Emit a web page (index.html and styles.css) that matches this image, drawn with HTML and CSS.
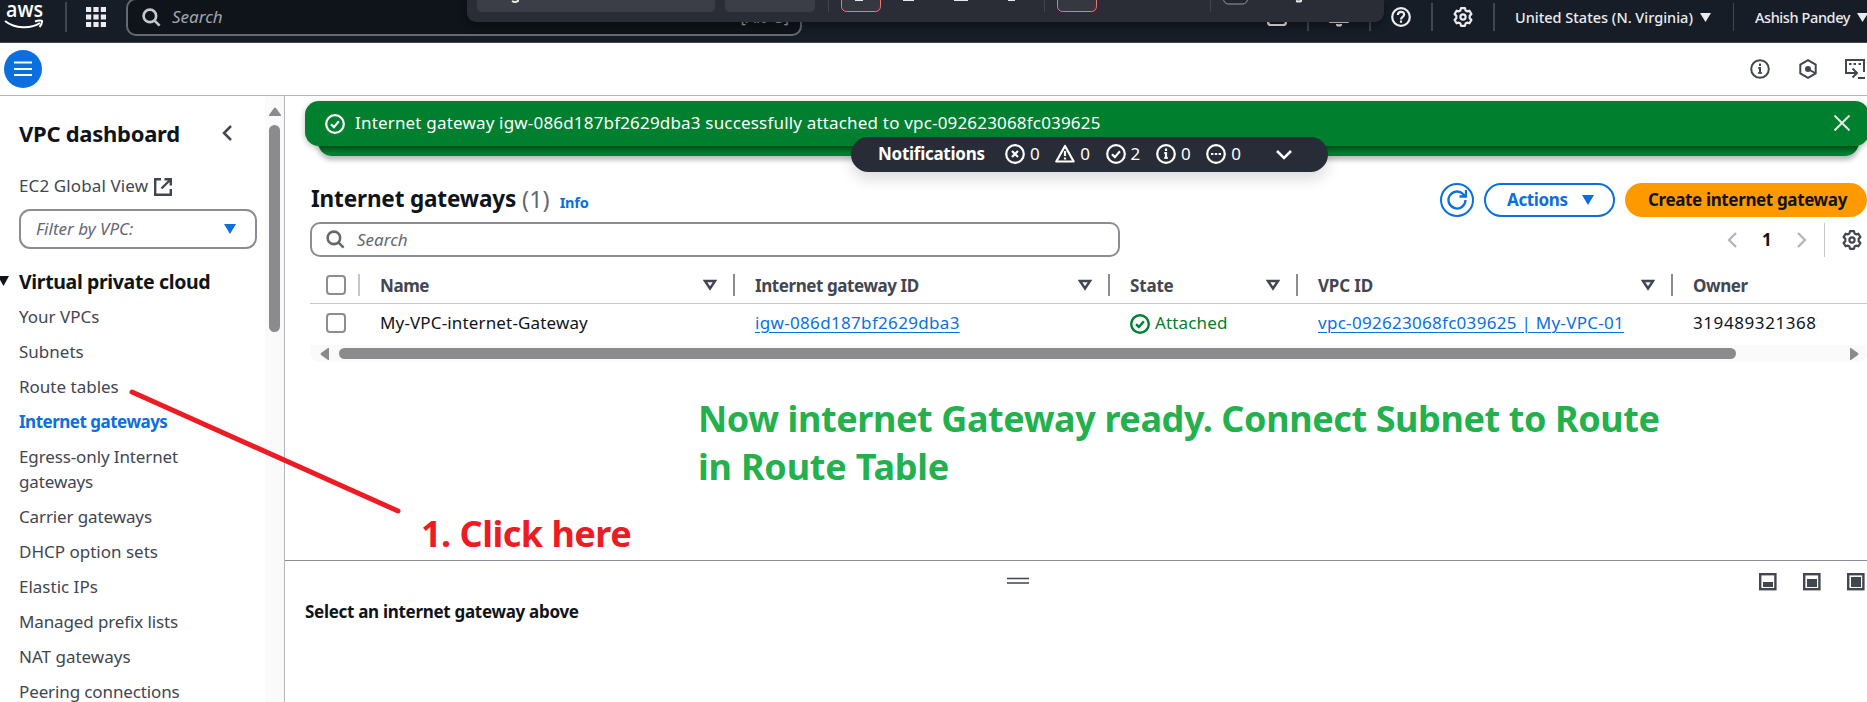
FILE: index.html
```html
<!DOCTYPE html>
<html lang="en">
<head>
<meta charset="utf-8">
<title>Internet gateways | VPC Console</title>
<link rel="stylesheet" href="styles.css">
</head>
<body>
<svg class="defs" aria-hidden="true">
  <symbol id="gear" viewBox="0 0 20 20"><path d="M8 1.200h4l.6 2.300 1.500.9 2.300-.7 2 3.400-1.700 1.700v2.400l1.700 1.700-2 3.400-2.300-.7-1.500.9-.6 2.300H8l-.6-2.300-1.500-.9-2.300.7-2-3.400 1.700-1.700V8.800L1.600 7.100l2-3.400 2.300.7 1.500-.9z" stroke-linejoin="round"/><circle cx="10" cy="10" r="2.600"/></symbol>
  <symbol id="info" viewBox="0 0 20 20"><circle cx="10" cy="10" r="8.800"/><path d="M10 8v6.500"/><path d="M8 9h2M8 14h4" stroke-width="1.400"/><path d="M10 4.500V7"/></symbol>
  <symbol id="check" viewBox="0 0 20 20"><circle cx="10" cy="10" r="8.800"/><path d="M6 10.200l2.900 2.900 5-5.800"/></symbol>
  <symbol id="lens" viewBox="0 0 20 20"><circle cx="8.300" cy="8.300" r="6.600"/><path d="M13 13l5.500 5.500"/></symbol>
  <symbol id="sort" viewBox="0 0 14 12"><path d="M2 2h10l-5 7.500z"/></symbol>
</svg>

<header class="topbar">
  <svg class="aws" viewBox="0 0 42 32"><text x="2" y="17" textLength="37" lengthAdjust="spacingAndGlyphs">aws</text><path d="M1 21c10 8 26 8 35 2"/><path d="M31 21.500c4-1.500 8-1 7 0 0 2-1 4-2.500 5.500"/></svg>
  <i class="bar bar-first"></i>
  <svg class="apps" viewBox="0 0 20 20"><path d="M0 2.500h5.200M7.400 2.500h5.200M14.800 2.500H20M0 10h5.200M7.400 10h5.200M14.800 10H20M0 17.500h5.200M7.400 17.500h5.200M14.800 17.500H20"/></svg>
  <div class="top-search">
    <svg class="ico" viewBox="0 0 20 20"><use href="#lens"/></svg>
    <span class="top-placeholder">Search</span>
    <span class="shortcut">[Alt+S]</span>
  </div>
  <div class="top-right">
    <svg class="ico" viewBox="0 0 20 20"><rect x="1" y="1" width="18" height="17" rx="3"/></svg>
    <i class="bar"></i>
    <svg class="ico" viewBox="0 0 20 20"><path d="M2 15h16l-3-4V6a5 5 0 0 0-10 0v5z"/><path d="M8 17a2 1.500 0 0 0 4 0"/></svg>
    <i class="bar"></i>
    <svg class="ico" viewBox="0 0 20 20"><circle cx="10" cy="10" r="8.800"/><path d="M6.900 8c0-4.200 6.200-4.200 6.200-.4 0 2.400-3.100 2.200-3.100 4.900M10 13.600v2.200"/></svg>
    <i class="bar"></i>
    <svg class="ico"><use href="#gear"/></svg>
    <i class="bar"></i>
    <span class="top-text region">United States (N. Virginia)</span>
    <svg class="caret" viewBox="0 0 11 10"><path d="M0 0h11L5.500 9z"/></svg>
    <i class="bar bar-thin"></i>
    <span class="top-text account">Ashish Pandey</span>
    <svg class="caret" viewBox="0 0 11 10"><path d="M0 0h11L5.500 9z"/></svg>
  </div>
</header>

<div class="capture-bar">
  <svg viewBox="0 0 917 22">
    <rect class="field" x="10" y="-20" width="238" height="32" rx="5"/>
    <rect class="field" x="258" y="-20" width="90" height="32" rx="5"/>
    <path class="sep" d="M361.500 0v12M577.500 0v12M743.500 0v12"/>
    <rect class="tool" x="374.500" y="-20" width="39" height="31.500" rx="5"/>
    <rect class="tool" x="590.500" y="-20" width="39" height="31.500" rx="5"/>
    <rect class="toggle" x="756.500" y="-16" width="24" height="20" rx="5"/>
    <path class="stub" d="M388 0h8M436 0h11M487 0h14M541 0h7"/>
    <path class="tail" d="M45 1q3 2 6 0V-3M829 1q3 1 5 0V-3"/>
  </svg>
</div>

<div class="subbar">
  <button class="menu"><svg viewBox="0 0 18 16"><path d="M0 1.500h18M0 8h18M0 14h18"/></svg></button>
  <div class="subbar-icons">
    <svg class="ico"><use href="#info"/></svg>
    <svg class="ico" viewBox="0 0 20 20"><path d="M10 1.200l7.700 4.400v8.800L10 18.800l-7.700-4.400V5.600z"/><circle class="dot" cx="10" cy="10" r="3"/><path d="M10 10l7 4"/></svg>
    <svg class="ico" viewBox="0 0 20 20"><path d="M5 14H1V1h18v12M4 5h2.500M8.500 5H11M13.500 5H16M5 14h6M7.500 9.500l4.500 4.500-4.500 4.500M13 19h7"/></svg>
  </div>
</div>

<div class="layout">
  <nav class="side">
    <div class="side-body">
      <div class="side-head"><h2>VPC dashboard</h2><svg viewBox="0 0 10 16"><path d="M9 1L2 8l7 7"/></svg></div>
      <a class="global">EC2 Global View <svg viewBox="0 0 18 18"><path d="M7 1.200H1.200v15.600h15.600V11M10.500 1.200h6.300v6.300M16.500 1.500L7.500 10.500"/></svg></a>
      <div class="select"><span>Filter by VPC:</span><svg viewBox="0 0 12 10"><path d="M0 0h12L6 10z"/></svg></div>
      <div class="group"><svg viewBox="0 0 11 10"><path d="M0 0h11L5.500 10z"/></svg><h3>Virtual private cloud</h3></div>
      <ul>
        <li>Your VPCs</li>
        <li>Subnets</li>
        <li>Route tables</li>
        <li class="active">Internet gateways</li>
        <li class="tight">Egress-only Internet gateways</li>
        <li class="tight">Carrier gateways</li>
        <li>DHCP option sets</li>
        <li>Elastic IPs</li>
        <li class="tight">Managed prefix lists</li>
        <li>NAT gateways</li>
        <li class="tight">Peering connections</li>
      </ul>
    </div>
    <div class="vscroll"><svg viewBox="0 0 12 9"><path d="M0 9V8l5-7q1-1 2 0l5 7v1z"/></svg><i></i></div>
  </nav>

  <main>
    <section class="list">
      <div class="flash">
        <svg class="ico"><use href="#check"/></svg>
        <span class="flash-text">Internet gateway igw-086d187bf2629dba3 successfully attached to vpc-092623068fc039625</span>
        <svg class="close" viewBox="0 0 16 16"><path d="M.5.5l15 15M15.500.5l-15 15"/></svg>
        <div class="pill">
          <b>Notifications</b>
          <span><svg class="ico" viewBox="0 0 20 20"><circle cx="10" cy="10" r="8.800"/><path d="M7 7l6 6M13 7l-6 6"/></svg>0</span>
          <span><svg class="ico" viewBox="0 0 20 20"><path d="M10 2L1.300 17.500h17.400z" stroke-linejoin="round"/><path d="M10 7v5M10 13.500v2"/></svg>0</span>
          <span><svg class="ico"><use href="#check"/></svg>2</span>
          <span><svg class="ico"><use href="#info"/></svg>0</span>
          <span><svg class="ico" viewBox="0 0 20 20"><circle cx="10" cy="10" r="8.800"/><path d="M5 10h2.400M8.800 10h2.400M12.600 10H15"/></svg>0</span>
          <svg class="chev" viewBox="0 0 16 10"><path d="M1 1l7 7 7-7"/></svg>
        </div>
      </div>

      <div class="title-row">
        <h1>Internet gateways</h1><span class="count">(1)</span><a class="info-link">Info</a>
        <div class="actions">
          <button class="refresh"><svg viewBox="0 0 20 20"><path d="M18.500 10a8.500 8.500 0 1 1-2.500-6l2.500 2.300M12.500 6.500H19V0"/></svg></button>
          <button class="outline"><span>Actions</span><svg viewBox="0 0 12 10"><path d="M0 0h12L6 10z"/></svg></button>
          <button class="primary"><span>Create internet gateway</span></button>
        </div>
      </div>

      <div class="filter-row">
        <div class="filter"><svg class="ico"><use href="#lens"/></svg><span>Search</span></div>
        <div class="pager">
          <svg viewBox="0 0 10 16"><path d="M9 1L2 8l7 7"/></svg>
          <b>1</b>
          <svg viewBox="0 0 10 16"><path d="M1 1l7 7-7 7"/></svg>
          <i></i>
          <svg class="ico"><use href="#gear"/></svg>
        </div>
      </div>

      <div class="grid head">
        <div class="pick"><i class="box"></i></div>
        <div class="cell"><span>Name</span><svg><use href="#sort"/></svg></div>
        <div class="cell"><span>Internet gateway ID</span><svg><use href="#sort"/></svg></div>
        <div class="cell"><span class="mild">State</span><svg><use href="#sort"/></svg></div>
        <div class="cell"><span class="mild">VPC ID</span><svg><use href="#sort"/></svg></div>
        <div class="cell last"><span>Owner</span></div>
      </div>
      <div class="grid row">
        <div class="pick"><i class="box"></i></div>
        <div class="cell"><span class="name">My-VPC-internet-Gateway</span></div>
        <div class="cell"><a class="igw">igw-086d187bf2629dba3</a></div>
        <div class="cell ok"><svg class="ico"><use href="#check"/></svg><span class="name">Attached</span></div>
        <div class="cell"><a class="vpc">vpc-092623068fc039625 | My-VPC-01</a></div>
        <div class="cell last"><span class="owner">319489321368</span></div>
      </div>
      <div class="hscroll">
        <svg viewBox="0 0 9 12"><path d="M9 0H8L1 5q-1 1 0 2l7 5h1z"/></svg><i></i><svg viewBox="0 0 9 12"><path d="M0 0h1l7 5q1 1 0 2l-7 5H0z"/></svg>
      </div>
    </section>

    <section class="split">
      <div class="split-bar">
        <svg class="handle" viewBox="0 0 22 8"><path d="M0 1.500h22M0 6h22"/></svg>
        <div class="sizes">
          <svg viewBox="0 0 18 18"><rect x="1.200" y="1.200" width="15.200" height="15"/><path d="M4 9h10v5H4z"/></svg>
          <svg viewBox="0 0 18 18"><rect x="1.200" y="1.200" width="15.200" height="15"/><path d="M4 6h10v8H4z"/></svg>
          <svg viewBox="0 0 18 18"><rect x="1.200" y="1.200" width="15.200" height="15"/><path d="M4 4h10v10H4z"/></svg>
        </div>
      </div>
      <h4>Select an internet gateway above</h4>
    </section>
  </main>
</div>

<svg class="pointer" viewBox="0 0 276 128"><path d="M4 4l266 119"/></svg>
<p class="note red">1. Click here</p>
<p class="note green">Now internet Gateway ready. Connect Subnet to Route<br><span>in Route Table</span></p>
</body>
</html>
```
FILE: styles.css
```css
* { box-sizing: border-box; }
body { margin: 0; width: 1867px; height: 702px; overflow: hidden; position: relative; background: #fff; color: #0f141a; font: 17px/25px "Noto Sans", sans-serif; display: flex; flex-direction: column; }
h1, h2, h3, h4, p, ul { margin: 0; padding: 0; }
ul { list-style: none; }
button { font: inherit; border: 0; padding: 0; }
span, b, a, h1, h2, h3, h4 { white-space: nowrap; }
svg { display: block; flex: none; fill: none; stroke: currentColor; stroke-width: 2; }
.defs { position: absolute; width: 0; height: 0; }
.ico { width: 20px; height: 20px; stroke-width: 2.200; }

.topbar { flex: none; height: 43px; background: #161d26; border-bottom: 1px solid #424650; display: flex; align-items: flex-start; color: #ebebf0; overflow: hidden; }
.aws { width: 42px; height: 32px; margin: 0 0 0 4px; color: #fff; flex: none; overflow: visible; }
.aws text { font: 600 22px "Open Sans", sans-serif; fill: #fff; stroke: none; }
.bar { width: 2px; height: 28px; margin-top: 3px; background: #424650; flex: none; }
.bar-first { margin: 2px 0 0 19px; height: 30px; }
.apps { width: 20px; height: 20px; margin: 7px 0 0 19px; stroke-width: 5; }
.top-search { flex: none; width: 676px; height: 38px; margin: -2px 0 0 20px; border: 2px solid #656871; border-radius: 10px; background: #0f141a; display: flex; align-items: center; padding-left: 14px; color: #c6c6cd; }
.top-search .ico { width: 19px; height: 19px; stroke-width: 2.800; }
.top-placeholder { font-style: italic; margin: 0 0 2px 11px; color: #a4a4ad; }
.shortcut { margin: 0 11px 0 auto; color: #a4a4ad; font-size: 16px; }
.top-right { margin-left: 465px; display: flex; flex: none; }
.top-right .ico { margin-top: 7px; }
.top-right .bar { margin-left: 20px; margin-right: 20px; }
.top-text { font-weight: 500; font-size: 14.500px; line-height: 34px; }
.account { letter-spacing: -.4px; }
.caret { width: 11px; height: 10px; fill: currentColor; stroke: none; margin: 13px 0 0 7px; }
.top-right .bar-thin { margin-left: 22px; margin-right: 21px; width: 1px; }

.capture-bar { position: absolute; left: 467px; top: 0; width: 917px; height: 22px; background: #2a2d36; border-radius: 0 0 9px 9px; overflow: hidden; box-shadow: 0 3px 8px rgba(0, 0, 0, .4); }
.capture-bar svg { width: 917px; height: 22px; stroke-width: 1; }
.field { fill: #3b3e47; stroke: none; }
.sep { stroke: #41454f; }
.tool { fill: #353841; stroke: #ef7772; }
.toggle { stroke: #969aa3; fill: #23262e; }
.stub, .tail { stroke: #e8e8e8; stroke-width: 2; }

.subbar { flex: none; height: 53px; border-bottom: 1px solid #b4b4bb; display: flex; align-items: center; justify-content: space-between; padding: 0 2px 0 4px; }
.menu { width: 38px; height: 38px; border-radius: 50%; background: #0b6fe0; color: #fff; display: flex; align-items: center; justify-content: center; }
.menu svg { width: 18px; height: 16px; stroke-width: 2.200; }
.subbar-icons { display: flex; gap: 28px; color: #424650; }
.subbar-icons .ico { stroke-width: 2; }
.subbar-icons .dot { fill: currentColor; stroke: none; }
.subbar-icons .ico:last-child { margin-left: -1px; }

.layout { flex: 1; min-height: 0; display: flex; }
.side { width: 285px; flex: none; border-right: 1px solid #b4b4bb; display: flex; overflow: hidden; }
.side-body { width: 265px; padding: 19px 8px 0 19px; color: #424650; flex: none; }
.side-head { display: flex; align-items: center; justify-content: space-between; height: 36px; padding-right: 25px; }
.side-head h2 { font-size: 22px; color: #0f141a; letter-spacing: -.27px; }
.side-head svg { width: 10px; height: 16px; stroke-width: 2.500; }
.global { display: flex; align-items: center; height: 26px; margin-top: 21px; letter-spacing: .12px; }
.global svg { width: 18px; height: 18px; margin: 3px 0 0 6px; stroke-width: 2.400; }
.select { height: 40px; margin-top: 11px; border: 2px solid #8c8c94; border-radius: 11px; display: flex; align-items: center; justify-content: space-between; padding: 0 19px 0 15px; font-style: italic; color: #656871; }
.select span { margin-bottom: 2px; }
.select svg { width: 12px; height: 10px; fill: #0b6fe0; stroke: none; }
.group { display: flex; align-items: center; margin: 19px 0 0 -21px; height: 26px; color: #0f141a; }
.group svg { width: 11px; height: 10px; fill: currentColor; stroke: none; margin-right: 10px; }
.group h3 { font-size: 19.500px; letter-spacing: -.36px; }
ul { margin-top: 10px; width: 190px; }
li { margin-bottom: 10px; line-height: 25px; }
.tight { letter-spacing: -.12px; }
.active { font-weight: 700; color: #0b6fe0; white-space: nowrap; letter-spacing: -.5px; }
.vscroll { width: 19px; background: #fafafa; display: flex; flex-direction: column; align-items: center; padding: 11px 0 0 0; }
.vscroll svg { width: 12px; height: 9px; }
.vscroll svg, .hscroll svg { fill: #8b8b8d; stroke: none; }
.vscroll i { width: 11px; height: 207px; border-radius: 6px; background: #8b8b8d; margin-top: 9px; }

main { flex: 1; min-width: 0; display: flex; flex-direction: column; overflow: hidden; }
.list { height: 464px; flex: none; padding: 5px 0 0 20px; }
.flash { position: relative; width: 1564px; height: 45px; background: #00802f; border-radius: 14px; color: #fff; display: flex; align-items: center; padding: 0 19px 0 20px; box-shadow: 0 2px 6px rgba(0, 0, 0, .25); }
.flash::before { content: ""; position: absolute; z-index: -1; left: 13px; right: 10px; top: 20px; height: 35px; border-radius: 14px; background: linear-gradient(#00621f 26px, #00802f 32px); box-shadow: 0 4px 5px rgba(0, 7, 22, .28); }
.flash-text { margin: 0 0 2px 10px; letter-spacing: .18px; }
.close { width: 16px; height: 16px; margin: 0 0 1px auto; color: #e3efe6; }
.pill { position: absolute; left: 546px; top: 36px; width: 477px; height: 35px; border-radius: 18px; background: #282c36; display: flex; align-items: center; padding: 0 0 2px 27px; box-shadow: 0 8px 14px rgba(0, 7, 22, .13); }
.pill b { width: 127px; letter-spacing: -.27px; }
.pill span { display: flex; align-items: center; gap: 5px; width: 50.300px; }
.pill .ico { margin-top: 1px; }
.pill .chev { width: 16px; height: 10px; margin: 3px 0 0 20px; stroke-width: 2.500; }

.title-row { display: flex; height: 34px; margin-top: 37px; align-items: center; padding-left: 6px; }
h1 { font-size: 22.500px; line-height: 34px; letter-spacing: -.15px; margin-bottom: 2px; }
.count { font-size: 23.500px; color: #656871; margin: 0 0 2px 6px; }
.info-link { font-weight: 700; font-size: 14.500px; letter-spacing: -.2px; color: #0b6fe0; margin: 4px 0 0 10px; }
.actions { margin-left: auto; display: flex; gap: 10px; height: 34px; font-weight: 700; }
.actions span { margin-bottom: 2px; letter-spacing: -.36px; }
.refresh { width: 34px; border: 2px solid #0b6fe0; border-radius: 50%; background: #fff; color: #0b6fe0; display: flex; align-items: center; justify-content: center; }
.refresh svg { width: 20px; height: 20px; stroke-width: 2.300; }
.outline { width: 131px; border: 2px solid #0b6fe0; border-radius: 17px; background: #fff; color: #0b6fe0; display: flex; align-items: center; justify-content: space-between; padding: 0 19px 0 21px; }
.outline svg { width: 12px; height: 10px; fill: currentColor; stroke: none; }
.primary { width: 242px; border-radius: 17px; background: #f90; color: #0f141a; display: flex; align-items: center; padding-left: 23px; }

.filter-row { display: flex; justify-content: space-between; margin: 5px 0 0 5px; height: 35px; }
.filter { width: 810px; border: 2px solid #8c8c94; border-radius: 10px; display: flex; align-items: center; padding-left: 14px; color: #656871; }
.filter .ico { width: 19px; height: 19px; stroke-width: 2.700; }
.filter span { font-style: italic; margin-left: 12px; }
.pager { display: flex; align-items: center; padding-right: 5px; }
.pager svg { width: 10px; height: 16px; color: #b4b4bb; stroke-width: 2.300; }
.pager b { margin: 0 26px 0 25px; width: 9px; }
.pager i { width: 1px; height: 34px; background: #c6c6cd; margin: 0 17px; }
.pager .ico { width: 20px; height: 20px; color: #424650; stroke-width: 2.200; }

.grid { display: grid; grid-template-columns: 50px 375px 375px 188px 375px 1fr; margin-left: 5px; align-items: center; }
.head { height: 47px; border-bottom: 1px solid #c6c6cd; font-weight: 700; color: #424650; padding-top: 10px; letter-spacing: -.42px; }
.mild { letter-spacing: -.18px; }
.row { height: 38px; }
.pick { display: flex; align-items: center; padding-left: 16px; height: 22px; }
.head .pick { border-right: 2px solid #c6c6cd; }
.box { width: 20px; height: 20px; border: 2px solid #8c8c94; border-radius: 4px; }
.cell { display: flex; align-items: center; height: 22px; padding-left: 20px; }
.head .cell { border-right: 2px solid #8c8c94; justify-content: space-between; padding-right: 16px; }
.head .cell.last { border: 0; }
.head svg { width: 14px; height: 12px; stroke-width: 2.400; }
.row .cell span, .row .cell a { margin-bottom: 2px; }
.row a { color: #0b6fe0; text-decoration: underline; text-decoration-thickness: 1px; text-underline-offset: 3px; }
.name { letter-spacing: .15px; }
.igw { letter-spacing: .33px; }
.vpc { letter-spacing: .29px; }
.owner { letter-spacing: .58px; }
.ok { color: #00802f; }
.ok .ico { margin: 1px 5px 0 0; stroke-width: 2.400; }
.hscroll { margin: 3px 0 0 5px; height: 17px; background: #fafafa; border-radius: 0 0 9px 9px; display: flex; align-items: center; padding: 0 8px 0 10px; }
.hscroll svg { width: 9px; height: 12px; }
.hscroll i { width: 1397px; height: 11px; border-radius: 6px; background: #8b8b8d; margin: 0 auto 0 10px; }

.split { flex: 1; border-top: 1px solid #8c8c94; }
.split-bar { display: flex; align-items: flex-start; padding: 12px 2px 0 722px; color: #424650; height: 44px; justify-content: space-between; }
.handle { width: 22px; height: 8px; margin-top: 4px; stroke-width: 1.500; }
.sizes { display: flex; gap: 26px; }
.sizes svg { width: 18px; height: 18px; stroke-width: 2.400; }
.sizes path { fill: currentColor; stroke: none; }
h4 { font-size: 17px; padding-left: 20px; line-height: 13px; letter-spacing: -.3px; }

.pointer { position: absolute; left: 128px; top: 388px; width: 276px; height: 128px; color: #ed1c24; stroke-width: 5; stroke-linecap: round; }
.note { position: absolute; font: 700 36px/48px "Noto Sans", sans-serif; }
.red { left: 421px; top: 510px; color: #ed1c24; letter-spacing: -.5px; }
.green { left: 698px; top: 395px; color: #22b14c; letter-spacing: -.4px; }
.green span { letter-spacing: -.2px; }
```
